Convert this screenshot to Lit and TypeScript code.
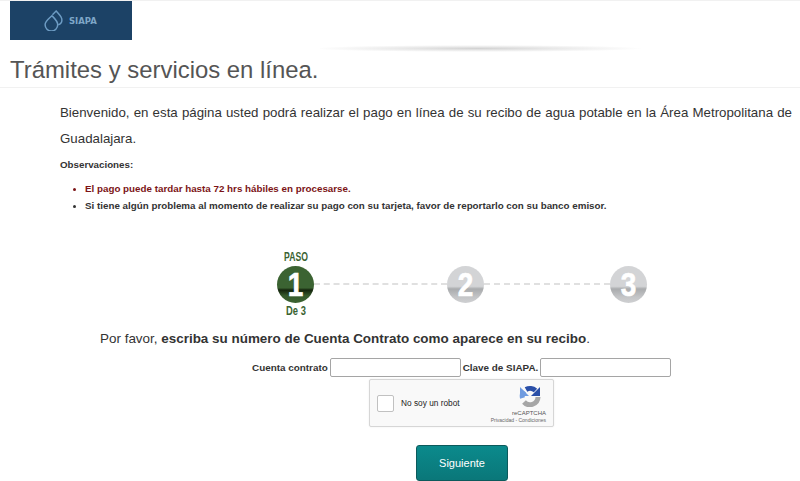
import { LitElement, html, css } from "lit";
import { customElement } from "lit/decorators.js";

@customElement("app-root")
export class AppRoot extends LitElement {
  static styles = css`
    :host { display: block; width: 800px; height: 481px; overflow: hidden; background: #fff; font-family: "Liberation Sans", Arial, sans-serif; color: #333; }
    * { box-sizing: border-box; }
    .top { height: 53px; border-top: 1px solid #f1f1f1; padding-left: 10px; display: flex; flex-direction: column; }
    .logo { width: 122px; height: 39px; flex: none; background: #1c4266; display: flex; align-items: center; gap: 5px; padding-left: 33px; }
    .logo svg { display: block; }
    .logo span { font: bold 8.5px "DejaVu Sans", sans-serif; color: #7ea6c8; margin-top: 1px; }
    .shadow { height: 7px; margin-top: 5px; margin-left: 310px; width: 330px; flex: none;
      background: radial-gradient(ellipse 50% 50% at 48% 50%, #d2d2d2 0%, #e8e8e8 45%, rgba(255,255,255,0) 100%); }
    h1 { margin: 0; font-weight: 400; font-size: 23.9px; line-height: 30px; height: 35px; padding: 2px 0 0 10px; color: #555; border-bottom: 1px solid #f1f1f1; }
    .body { padding: 12px 8px 0 60px; }
    .welcome { margin: 0; font-size: 13.3px; line-height: 26px; color: #333; text-align: justify; }
    .obs { margin: 6px 0 0; font-size: 9.75px; line-height: 14px; font-weight: 700; color: #333; }
    ul { margin: 8px 0 0; padding: 0 0 0 25px; font-size: 9.8px; font-weight: 700; line-height: 17px; }
    li::marker { font-size: 9px; }
    li.red { color: #7c1416; }
    .steps { margin: 35px 0 0 0; height: 70px; display: flex; align-items: center; padding-left: 217px; }
    .node { position: relative; width: 37px; height: 37px; flex: none; }
    .circle { width: 37px; height: 37px; border-radius: 50%; display: flex; align-items: center; justify-content: center;
      color: #fff; font: 700 34px/37px "Liberation Sans", sans-serif; }
    .digit { display: block; transform: scaleX(.82); -webkit-text-stroke: .7px #fff; }
    .on { background: linear-gradient(#3b6332 0 59%, #14240d 65%, #35592c 80%, #3b6332 100%); }
    .off { background: linear-gradient(#d3d4d6 0 55%, #a9abad 62%, #c4c5c7 84%, #cfd0d2 100%); }
    .lbl { position: absolute; left: 50%; transform: translateX(-50%) scaleX(.72); font: 700 12px/14px "Liberation Sans", sans-serif; color: #3b6332; white-space: nowrap; }
    .lbl.t { top: -16px; }
    .lbl.b { bottom: -15px; transform: translateX(-50%) scaleX(.78); }
    .dash { height: 0; border-top: 2px dashed #e0e0e0; flex: none; }
    .lead { margin: 10px 0 0; padding-left: 40px; font-size: 13.45px; line-height: 20px; color: #333; }
    .form { margin-top: 9px; display: flex; align-items: center; justify-content: flex-start; padding-left: 192px; gap: 2px; font-size: 9.9px; font-weight: 700; }
    input { width: 131px; height: 19px; border: 1px solid #a5a5a5; border-radius: 2px; padding: 0; background: #fff; }
    .center { display: flex; justify-content: center; padding-left: 71px; }
    .captcha { margin-top: 2px; width: 185px; height: 48px; border: 1px solid #d6d6d6; border-radius: 2px; background: #f9f9f9; box-shadow: 0 0 2px rgba(0,0,0,.08); display: flex; align-items: center; padding-left: 7px; position: relative; }
    .box { width: 17px; height: 17px; background: #fff; border: 1px solid #c1c1c1; border-radius: 2px; flex: none; }
    .nr { font-size: 8.3px; color: #222; margin-left: 7px; }
    .rc { position: absolute; right: 7px; top: 5px; width: 60px; display: flex; flex-direction: column; align-items: flex-end; }
    .rc svg { margin-right: 5px; }
    .rc b { font-weight: 400; font-size: 6px; line-height: 8px; color: #555; margin-top: 2px; }
    .rc i { font-style: normal; font-size: 5px; line-height: 7px; color: #666; white-space: nowrap; }
    .btn { margin-top: 18px; width: 92px; height: 36px; margin-left: 1px; border: 1px solid #0c5a5c; border-radius: 3px; color: #fff; font: 400 11px "Liberation Sans", sans-serif;
      background: linear-gradient(#0b8a8c, #0a7779); display: flex; align-items: center; justify-content: center; }
  `;

  render() {
    return html`
      <div class="top">
        <div class="logo">
          <svg width="21" height="21" viewBox="0 0 20 20" fill="none" stroke="#6d9cc4" stroke-width="1.4">
            <path d="M8.500 5.500C6 8 2 10.500 2 14a6 6 0 0 0 12 0c0-3.500-3-6-5.500-8.500Z" />
            <path d="M9 4.500 12.500 1C14.500 3.500 18 6 18 9.500c0 2.500-1.500 4-3.500 4.500" />
          </svg>
          <span>SIAPA</span>
        </div>
        <div class="shadow"></div>
      </div>
      <h1>Trámites y servicios en línea.</h1>
      <div class="body">
        <p class="welcome">Bienvenido, en esta página usted podrá realizar el pago en línea de su recibo de agua potable en la Área Metropolitana de Guadalajara.</p>
        <p class="obs">Observaciones:</p>
        <ul>
          <li class="red">El pago puede tardar hasta 72 hrs hábiles en procesarse.</li>
          <li>Si tiene algún problema al momento de realizar su pago con su tarjeta, favor de reportarlo con su banco emisor.</li>
        </ul>
        <div class="steps">
          <div class="node">
            <span class="lbl t">PASO</span>
            <div class="circle on"><span class="digit">1</span></div>
            <span class="lbl b">De 3</span>
          </div>
          <div class="dash" style="width:133px"></div>
          <div class="node"><div class="circle off"><span class="digit">2</span></div></div>
          <div class="dash" style="width:126px"></div>
          <div class="node"><div class="circle off"><span class="digit">3</span></div></div>
        </div>
        <p class="lead">Por favor, <b>escriba su número de Cuenta Contrato como aparece en su recibo</b>.</p>
        <div class="form">
          <label>Cuenta contrato</label><input /><label>Clave de SIAPA.</label><input />
        </div>
        <div class="center">
          <div class="captcha">
            <div class="box"></div>
            <span class="nr">No soy un robot</span>
            <div class="rc">
              <svg width="22" height="22" viewBox="0 0 22 22" fill="none" stroke-width="5">
                <path d="M19 12a8 8 0 0 1-14 5" stroke="#a6a6a6" />
                <path d="M3.500 13a8 8 0 0 1 1.500-7" stroke="#6f9be0" />
                <path d="M1 2v9h9z" fill="#6f9be0" stroke="none" />
                <path d="M7 4.500a8 8 0 0 1 9.500 1" stroke="#2a4fa8" />
                <path d="M21 2v9h-9z" fill="#2a4fa8" stroke="none" />
              </svg>
              <b>reCAPTCHA</b>
              <i>Privacidad - Condiciones</i>
            </div>
          </div>
        </div>
        <div class="center"><div class="btn">Siguiente</div></div>
      </div>
    `;
  }
}
